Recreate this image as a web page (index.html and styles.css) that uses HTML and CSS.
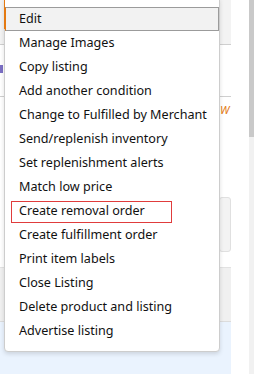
FILE: index.html
```html
<!DOCTYPE html>
<html>
<head>
  <meta charset="utf-8">
  <meta name="viewport" content="width=device-width">
  <title>Listing actions</title>
  <link rel="stylesheet" href="styles.css">
</head>
<body>
  <div class="page">
    <div class="content">
      <div class="table">
        <div class="row r1"></div>
        <div class="row r2"><span class="mark"></span></div>
        <div class="row r3"><span class="warn">W</span></div>
        <div class="row r4"><span class="ghost-btn"></span></div>
        <div class="row r5"></div>
        <div class="row r6"></div>
        <div class="row r7"></div>
      </div>

      <ul class="menu">
        <li class="item active">Edit</li>
        <li class="item">Manage Images</li>
        <li class="item">Copy listing</li>
        <li class="item">Add another condition</li>
        <li class="item">Change to Fulfilled by Merchant</li>
        <li class="item">Send/replenish inventory</li>
        <li class="item">Set replenishment alerts</li>
        <li class="item">Match low price</li>
        <li class="item marked">Create removal order</li>
        <li class="item">Create fulfillment order</li>
        <li class="item">Print item labels</li>
        <li class="item">Close Listing</li>
        <li class="item">Delete product and listing</li>
        <li class="item">Advertise listing</li>
      </ul>
    </div>
    <div class="scrollbar"><div class="thumb"></div></div>
  </div>
</body>
</html>
```

FILE: styles.css
```css
html, body {margin:0; padding:0;}
body {
  width:254px; height:374px; overflow:hidden;
  background:#fff;
  font-family: "Noto Sans", "Open Sans", Arial, sans-serif;
}

.page {display:flex; height:374px;}
.content {position:relative; flex:1; height:374px;}
.scrollbar {width:5px; background:#f1f1f1;}
.scrollbar .thumb {height:137px; background:#c9c9c9;}

/* table behind the menu */
.table {width:231px; height:374px; display:flex; flex-direction:column;}
.row {box-sizing:border-box; position:relative;}
.r1 {height:45px; background:#f3f3f3; border-bottom:1px solid #cfcfcf;}
.r2 {height:52px; background:#fff; border-bottom:1px solid #cfcfcf;}
.r3 {height:100px; background:#fff; display:flex; justify-content:flex-end; padding-top:8px;}
.r4 {height:56px; display:flex; justify-content:flex-end;}
.r5 {height:14px;}
.r6 {height:54px; background:#f0f0f0; border-top:1px solid #e2e2e2;}
.r7 {flex:1; background:#eaf3fe; border-top:1px solid #dcdcdc;}

.mark {position:absolute; left:0; top:20px; width:3px; height:8px; background:#7b6fc4;}
.warn {
  color:#e47911; font-style:italic; font-size:11px; line-height:10px;
  width:11px;
}
.ghost-btn {
  box-sizing:border-box; width:12px; height:55px;
  background:#f3f3f3; border:1px solid #e0e0e0; border-radius:3px;
}

/* actions dropdown */
.menu {
  position:absolute; left:4px; top:-2px;
  width:216px; box-sizing:border-box;
  margin:0; padding:8px 0;
  list-style:none;
  background:#fff;
  border:1px solid #cdcdcd;
  border-radius:0 0 4px 4px;
  box-shadow:0 2px 4px rgba(0,0,0,.13);
}
.menu::before {
  content:""; position:absolute; left:-1px; top:0; width:1px; height:30px;
  background:#e47911;
}
.item {
  position:relative;
  height:24px; line-height:23px;
  padding-left:14px;
  font-size:12.6px; color:#111;
  white-space:nowrap;
}
.item.active {
  box-sizing:border-box;
  background:#f2f2f2;
  border:1px solid #9b9b9b;
  border-left-color:#e47911;
  line-height:21px;
  padding-left:13px;
}
.item.marked::after {
  content:""; position:absolute;
  left:6px; top:2px; width:161px; height:22px;
  box-sizing:border-box;
  border:1px solid #e03c3c;
}
```
